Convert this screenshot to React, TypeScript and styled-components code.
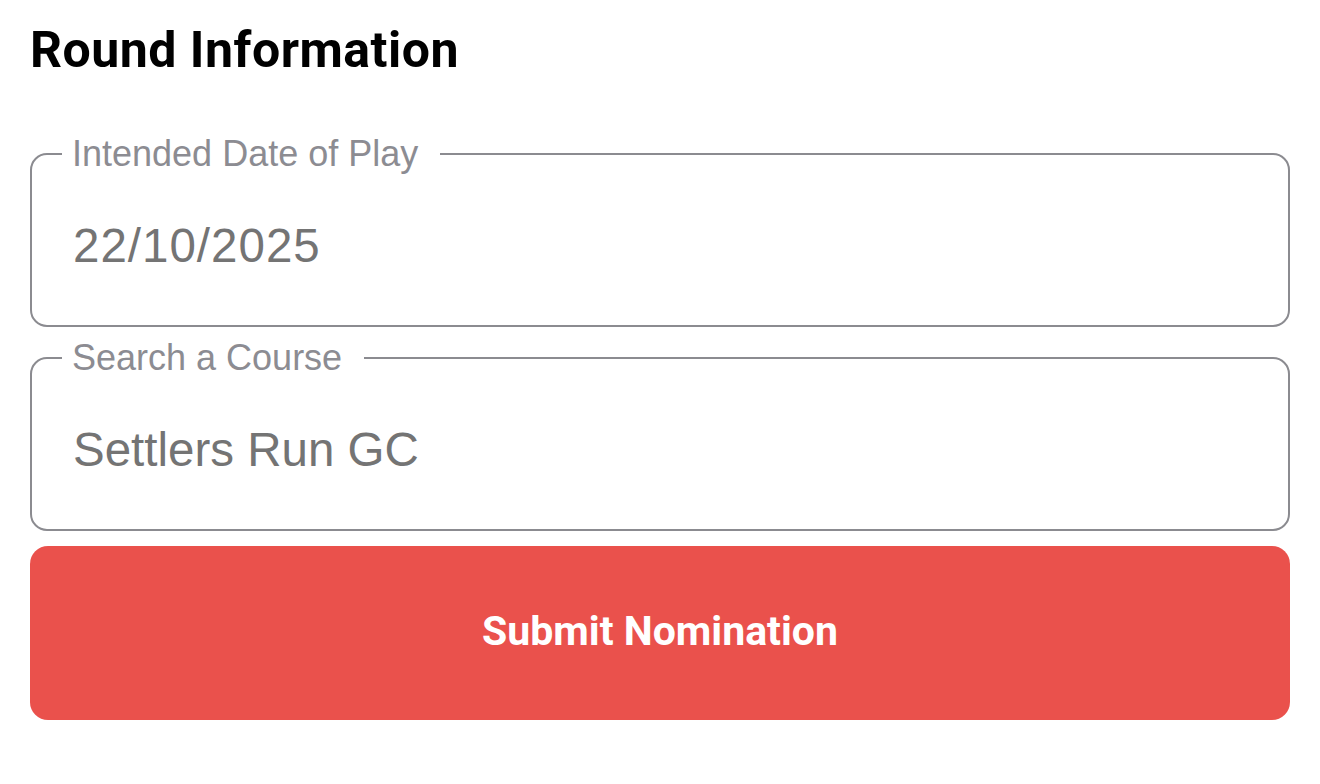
import React from "react";
import styled, { createGlobalStyle } from "styled-components";

const Global = createGlobalStyle`
  html, body { margin: 0; padding: 0; background: #ffffff; }
  * { box-sizing: border-box; }
`;

const Page = styled.main`
  display: flex;
  flex-direction: column;
  padding: 21px 30px 0 30px;
  font-family: "Liberation Sans", Arial, sans-serif;
`;

const Heading = styled.h1`
  margin: 0;
  font-family: Roboto, "Liberation Sans", sans-serif;
  font-weight: 700;
  font-size: 50px;
  line-height: normal;
  color: #000;
  letter-spacing: 0.5px;
`;

const Fields = styled.div`
  display: flex;
  flex-direction: column;
  gap: 13px;
  margin-top: 57px;
`;

const Field = styled.fieldset`
  margin: 0;
  padding: 0 30px;
  border: 2px solid #8b8b90;
  border-radius: 17px;
  min-width: 0;
`;

const Legend = styled.legend`
  padding: 0 22px 0 10px;
  font-size: 36px;
  line-height: 36px;
  color: #8c8c92;
`;

const Value = styled.div<{ $tracking?: number }>`
  padding: 46px 11px 51px;
  font-size: 47.5px;
  line-height: 56px;
  color: #747474;
  letter-spacing: ${(p) => p.$tracking ?? 0}px;
`;

const SubmitButton = styled.button`
  margin-top: 15px;
  height: 174px;
  border: none;
  border-radius: 18px;
  background: #ea514c;
  color: #ffffff;
  font-family: Roboto, "Liberation Sans", sans-serif;
  font-weight: 700;
  font-size: 41px;
  display: flex;
  align-items: center;
  justify-content: center;
  padding: 0 0 4px;
`;

const FormField = ({
  label,
  value,
  tracking,
}: {
  label: string;
  value: string;
  tracking?: number;
}) => (
  <Field>
    <Legend>{label}</Legend>
    <Value $tracking={tracking}>{value}</Value>
  </Field>
);

export default function App() {
  return (
    <>
      <Global />
      <Page>
        <Heading>Round Information</Heading>
        <Fields>
          <FormField label="Intended Date of Play" value="22/10/2025" tracking={1} />
          <FormField label="Search a Course" value="Settlers Run GC" />
        </Fields>
        <SubmitButton>Submit Nomination</SubmitButton>
      </Page>
    </>
  );
}
